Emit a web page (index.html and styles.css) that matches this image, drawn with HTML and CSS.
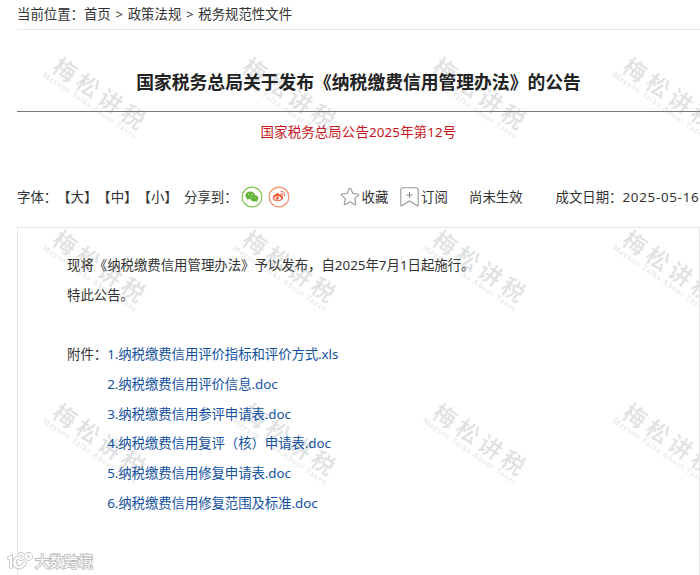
FILE: index.html
```
<!DOCTYPE html>
<html lang="zh-CN">
<head>
    <meta charset="UTF-8">
    <meta name="viewport" content="width=device-width, initial-scale=1.0">
    <title>国家税务总局关于发布《纳税缴费信用管理办法》的公告</title>
    <link rel="stylesheet" href="styles.css">
</head>
<body>
    <div class="watermarks">
        <div class="mark"><b>梅松讲税</b><i>Mayson Talks About Taxes</i></div>
        <div class="mark"><b>梅松讲税</b><i>Mayson Talks About Taxes</i></div>
        <div class="mark"><b>梅松讲税</b><i>Mayson Talks About Taxes</i></div>
        <div class="mark"><b>梅松讲税</b><i>Mayson Talks About Taxes</i></div>
        <div class="mark"><b>梅松讲税</b><i>Mayson Talks About Taxes</i></div>
        <div class="mark"><b>梅松讲税</b><i>Mayson Talks About Taxes</i></div>
        <div class="mark"><b>梅松讲税</b><i>Mayson Talks About Taxes</i></div>
        <div class="mark"><b>梅松讲税</b><i>Mayson Talks About Taxes</i></div>
        <div class="mark"><b>梅松讲税</b><i>Mayson Talks About Taxes</i></div>
        <div class="mark"><b>梅松讲税</b><i>Mayson Talks About Taxes</i></div>
        <div class="mark"><b>梅松讲税</b><i>Mayson Talks About Taxes</i></div>
        <div class="mark"><b>梅松讲税</b><i>Mayson Talks About Taxes</i></div>
    </div>

    <div class="page">
        <div class="breadcrumb">
            <span>当前位置：</span><a href="#">首页</a><span class="sep">&gt;</span><a href="#">政策法规</a><span class="sep">&gt;</span><a href="#">税务规范性文件</a>
        </div>

        <h1>国家税务总局关于发布《纳税缴费信用管理办法》的公告</h1>
        <div class="doc-number">国家税务总局公告2025年第12号</div>

        <div class="toolbar">
            <div class="font-size"><span>字体：</span><a href="#">【大】</a><a href="#">【中】</a><a href="#">【小】</a></div>
            <div class="share">
                <span>分享到：</span>
                <svg class="share-icon" viewBox="0 0 22 22">
                    <circle cx="11" cy="11" r="9.9" fill="#fff" stroke="#7bc549" stroke-width="1.2"/>
                    <path d="M9.3 5.6c-2.8 0-4.9 1.7-4.9 3.9 0 1.3.7 2.3 1.8 3l-.5 1.6 1.9-1c.6.2 1.1.2 1.7.2 2.8 0 4.9-1.7 4.9-3.8s-2.1-3.9-4.900-3.900z" fill="#5fb336"/>
                    <path d="M13.4 8.800c-2.400 0-4.200 1.500-4.200 3.400s1.800 3.400 4.200 3.400c.5 0 .9-.1 1.400-.2l1.500.8-.4-1.300c1-.6 1.600-1.600 1.600-2.700 0-1.900-1.800-3.400-4.100-3.400z" fill="#5fb336" stroke="#fff" stroke-width=".3"/>
                    <g fill="#fff"><circle cx="7.7" cy="8.2" r=".5"/><circle cx="11" cy="8.2" r=".5"/><circle cx="12" cy="11.3" r=".4"/><circle cx="14.8" cy="11.3" r=".4"/></g>
                </svg>
                <svg class="share-icon" viewBox="0 0 22 22">
                    <circle cx="11" cy="11" r="9.9" fill="#fff" stroke="#f58a66" stroke-width="1.2"/>
                    <path d="M9.3 7.3c1.2-.5 2 .1 1.7 1.3 1.7-.7 3.2-.2 2.7 1.3 1.2.4 1.7 1.2 1.5 2.2-.4 1.9-2.7 3.2-5.3 3.2-2.9 0-5.1-1.3-5.1-3.3s2.2-4 4.5-4.7z" fill="#ee5b35"/>
                    <ellipse cx="9.7" cy="12.2" rx="3.4" ry="2" fill="#fff"/>
                    <circle cx="9.3" cy="12.3" r="1.5" fill="#ee5b35"/>
                    <path d="M13 5.5c2.5-.5 4.4 1.5 3.7 4M13.3 7.4c1.2-.2 1.9.6 1.6 1.7" fill="none" stroke="#ee5b35" stroke-width="1" stroke-linecap="round"/>
                </svg>
            </div>
            <div class="action">
                <svg class="star" viewBox="0 0 20 20"><path d="M10 1.2q.6 0 .9.7l2 4.600 5 .5q1.400.2.5 1.200l-3.700 3.500 1 5.100q.2 1.400-1 .8L10 15l-4.700 2.600q-1.200.6-1-.8l1-5.100-3.700-3.500q-.9-1 .5-1.200l5-.5 2-4.600q.3-.7.9-.7z" fill="none" stroke="#999" stroke-width="1.1"/></svg>
                <span>收藏</span>
            </div>
            <div class="action subscribe">
                <svg class="bookmark" viewBox="0 0 19 20"><path d="M2.8.7h13.400q2 0 2 2v15.600q0 1.200-1 .5L9.500 14l-7.700 4.800q-1 .7-1-.5V2.700q0-2 2-2z" fill="none" stroke="#999" stroke-width="1.1"/><path d="M9.5 5v6M6.500 8h6" stroke="#888" stroke-width="1.1"/></svg>
                <span>订阅</span>
            </div>
            <div class="status">尚未生效</div>
            <div class="date">成文日期：<span>2025-05-16</span></div>
        </div>

        <div class="article">
            <p>现将《纳税缴费信用管理办法》予以发布，自2025年7月1日起施行。</p>
            <p>特此公告。</p>
            <div class="attachments">
                <span>附件：</span>
                <ul>
                    <li><a href="#">1.纳税缴费信用评价指标和评价方式.xls</a></li>
                    <li><a href="#">2.纳税缴费信用评价信息.doc</a></li>
                    <li><a href="#">3.纳税缴费信用参评申请表.doc</a></li>
                    <li><a href="#">4.纳税缴费信用复评（核）申请表.doc</a></li>
                    <li><a href="#">5.纳税缴费信用修复申请表.doc</a></li>
                    <li><a href="#">6.纳税缴费信用修复范围及标准.doc</a></li>
                </ul>
            </div>
        </div>
    </div>

    <div class="source">
        <svg viewBox="0 0 27 18">
            <g fill="none" stroke-linecap="round">
                <path d="M2 6l2-1v10M10 6q-3 2-2.500 6 2 4.500 6.500 3 3.500-1.500 3.500-4.500" stroke="#c4c4c4" stroke-width="4"/>
                <circle cx="14" cy="4.5" r="2.7" stroke="#c4c4c4" stroke-width="3.4"/>
                <circle cx="21.5" cy="4.5" r="2.7" stroke="#c4c4c4" stroke-width="3.4"/>
                <path d="M2 6l2-1v10M10 6q-3 2-2.500 6 2 4.500 6.500 3 3.500-1.500 3.500-4.500" stroke="#fff" stroke-width="2.4"/>
                <circle cx="14" cy="4.5" r="2.7" stroke="#fff" stroke-width="1.8"/>
                <circle cx="21.5" cy="4.5" r="2.7" stroke="#fff" stroke-width="1.8"/>
            </g>
        </svg>
        <span>大数跨境</span>
    </div>
</body>
</html>
```

FILE: styles.css
```
* {
    box-sizing: border-box;
    margin: 0;
    padding: 0;
}

body {
    position: relative;
    width: 700px;
    height: 575px;
    overflow: hidden;
    background: #fff;
    color: #333;
    font-family: "Noto Sans", "Noto Sans CJK SC", sans-serif;
    font-size: 13.4px;
    text-spacing-trim: space-all;
}

a {
    color: inherit;
    text-decoration: none;
}

.page {
    position: relative;
    height: 575px;
    padding-left: 17px;
    display: flex;
    flex-direction: column;
    white-space: nowrap;
}

.breadcrumb {
    display: flex;
    height: 30px;
    line-height: 29px;
    border-bottom: 1px solid #e9e9e9;
}

.sep {
    width: 17px;
    text-align: center;
}

h1 {
    height: 82px;
    padding-top: 37px;
    line-height: 30px;
    border-bottom: 1px solid #777;
    text-align: center;
    font-size: 17.8px;
    font-weight: bold;
    color: #222;
}

.doc-number {
    height: 42px;
    line-height: 41px;
    text-align: center;
    letter-spacing: 0.15px;
    color: #c7161d;
}

.toolbar {
    display: flex;
    align-items: center;
    height: 30px;
    margin-top: 28px;
    line-height: 30px;
}

.font-size {
    display: flex;
    width: 167px;
}

.share {
    display: flex;
    align-items: center;
    width: 156px;
}

.share span {
    width: 56.5px;
}

.share-icon {
    width: 22px;
    height: 22px;
    margin-right: 5px;
}

.action {
    display: flex;
    align-items: center;
    width: 60px;
}

.star {
    width: 20px;
    height: 20px;
    margin-right: 1.5px;
}

.bookmark {
    width: 19px;
    height: 20px;
    margin-right: 2px;
}

.subscribe {
    width: 69px;
}

.status {
    width: 86.5px;
}

.date span {
    letter-spacing: 0.7px;
}

.article {
    flex: 1;
    margin-top: 15px;
    padding: 23px 0 0 49px;
    border: 1px solid #e6e6e6;
    border-bottom: 0;
    line-height: 29.7px;
}

.attachments {
    display: flex;
    margin-top: 29.7px;
}

.attachments ul {
    list-style: none;
}

.attachments a {
    color: #1452a0;
    letter-spacing: -0.07px;
}

/* background watermarks */
.watermarks {
    position: absolute;
    top: 0;
    left: 0;
    width: 700px;
    height: 575px;
    padding: 45px 0 0 37px;
    overflow: hidden;
    display: grid;
    grid-template-columns: repeat(4, 190px);
    grid-auto-rows: 173px;
}

.mark {
    width: 120px;
    height: 100px;
    display: flex;
    flex-direction: column;
    align-items: center;
    justify-content: center;
    transform: rotate(34.5deg);
    white-space: nowrap;
    color: #dfe2e2;
}

.mark b {
    padding-left: 6px;
    font-family: "Noto Sans CJK SC", sans-serif;
    font-size: 23px;
    font-weight: 500;
    letter-spacing: 4.5px;
    line-height: 24px;
}

.mark i {
    font-family: "Liberation Serif", serif;
    font-size: 8px;
    font-style: normal;
    letter-spacing: 1.05px;
    line-height: 9px;
}

.source {
    position: absolute;
    left: 7px;
    top: 551px;
    display: flex;
    align-items: center;
}

.source svg {
    width: 27px;
    height: 18px;
    overflow: visible;
}

.source span {
    margin-left: 1px;
    font-size: 14.5px;
    line-height: 20px;
    color: #fff;
    -webkit-text-stroke: 1.8px #bcbcbc;
    paint-order: stroke fill;
}
```
